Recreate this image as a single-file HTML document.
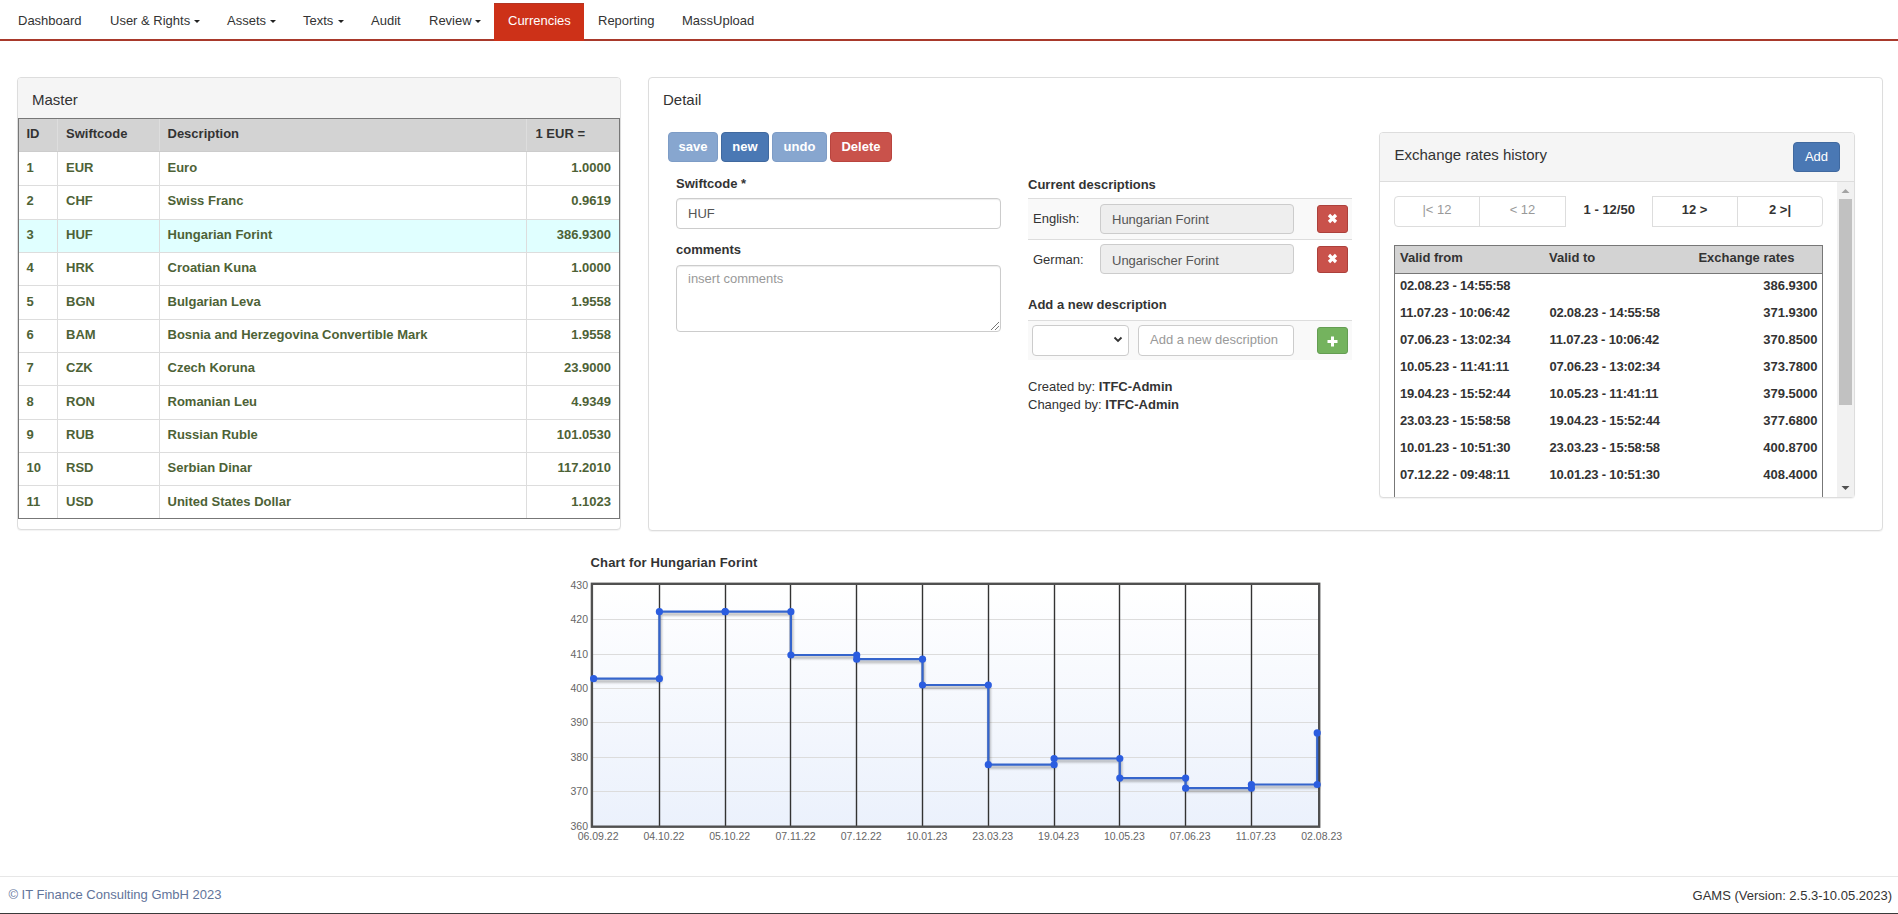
<!DOCTYPE html>
<html><head><meta charset="utf-8"><title>Currencies</title>
<style>
html,body{margin:0;padding:0;background:#fff;}
body{width:1898px;height:914px;position:relative;overflow:hidden;font-family:"Liberation Sans",sans-serif;font-size:13px;color:#333;}
.t{position:absolute;white-space:nowrap;}
.r{position:absolute;box-sizing:border-box;}
svg{position:absolute;}
</style></head><body>
<div class="r" style="left:0px;top:39px;width:1898px;height:2px;background:#a8392b;"></div>
<div class="r" style="left:494px;top:3px;width:90px;height:38px;background:#cd3118;border-top:1px solid #b23624;"></div>
<div class="t" style="left:18px;top:10.50px;font-size:13px;line-height:20px;font-weight:400;color:#333;">Dashboard</div>
<div class="t" style="left:110px;top:10.50px;font-size:13px;line-height:20px;font-weight:400;color:#333;">User &amp; Rights</div>
<div class="t" style="left:227px;top:10.50px;font-size:13px;line-height:20px;font-weight:400;color:#333;">Assets</div>
<div class="t" style="left:303px;top:10.50px;font-size:13px;line-height:20px;font-weight:400;color:#333;">Texts</div>
<div class="t" style="left:371px;top:10.50px;font-size:13px;line-height:20px;font-weight:400;color:#333;">Audit</div>
<div class="t" style="left:429px;top:10.50px;font-size:13px;line-height:20px;font-weight:400;color:#333;">Review</div>
<div class="t" style="left:598px;top:10.50px;font-size:13px;line-height:20px;font-weight:400;color:#333;">Reporting</div>
<div class="t" style="left:682px;top:10.50px;font-size:13px;line-height:20px;font-weight:400;color:#333;">MassUpload</div>
<div class="t" style="left:508px;top:10.50px;font-size:13px;line-height:20px;font-weight:400;color:#fff;">Currencies</div>
<div class="r" style="left:194px;top:20px;width:0;height:0;border-top:3px solid #222;border-left:3px solid transparent;border-right:3px solid transparent;"></div>
<div class="r" style="left:270px;top:20px;width:0;height:0;border-top:3px solid #222;border-left:3px solid transparent;border-right:3px solid transparent;"></div>
<div class="r" style="left:338px;top:20px;width:0;height:0;border-top:3px solid #222;border-left:3px solid transparent;border-right:3px solid transparent;"></div>
<div class="r" style="left:475px;top:20px;width:0;height:0;border-top:3px solid #222;border-left:3px solid transparent;border-right:3px solid transparent;"></div>
<div class="r" style="left:17px;top:77px;width:604px;height:453px;border:1px solid #ddd;border-radius:4px;box-shadow:0 1px 1px rgba(0,0,0,.05);background:#fff;"></div>
<div class="r" style="left:18px;top:78px;width:602px;height:40px;background:#f5f5f5;border-radius:3px 3px 0 0;"></div>
<div class="t" style="left:32px;top:88.80px;font-size:15px;line-height:22px;font-weight:400;color:#333;">Master</div>
<div class="r" style="left:18px;top:118px;width:602px;height:401px;border:1px solid #777;"></div>
<div class="r" style="left:19px;top:119px;width:600px;height:33px;background:#d3d3d3;"></div>
<div class="r" style="left:19px;top:219px;width:600px;height:33px;background:#e0ffff;"></div>
<div class="r" style="left:19px;top:185px;width:600px;height:1px;background:#ddd;"></div>
<div class="r" style="left:19px;top:219px;width:600px;height:1px;background:#ddd;"></div>
<div class="r" style="left:19px;top:252px;width:600px;height:1px;background:#ddd;"></div>
<div class="r" style="left:19px;top:285px;width:600px;height:1px;background:#ddd;"></div>
<div class="r" style="left:19px;top:319px;width:600px;height:1px;background:#ddd;"></div>
<div class="r" style="left:19px;top:352px;width:600px;height:1px;background:#ddd;"></div>
<div class="r" style="left:19px;top:385px;width:600px;height:1px;background:#ddd;"></div>
<div class="r" style="left:19px;top:419px;width:600px;height:1px;background:#ddd;"></div>
<div class="r" style="left:19px;top:452px;width:600px;height:1px;background:#ddd;"></div>
<div class="r" style="left:19px;top:485px;width:600px;height:1px;background:#ddd;"></div>
<div class="r" style="left:57px;top:119px;width:1px;height:399px;background:#ddd;"></div>
<div class="r" style="left:159px;top:119px;width:1px;height:399px;background:#ddd;"></div>
<div class="r" style="left:526px;top:119px;width:1px;height:399px;background:#ddd;"></div>
<div class="r" style="left:19px;top:151px;width:600px;height:1px;background:#ccc;"></div>
<div class="t" style="left:26.5px;top:124.10px;font-size:13px;line-height:20px;font-weight:700;color:#333;">ID</div>
<div class="t" style="left:66px;top:124.10px;font-size:13px;line-height:20px;font-weight:700;color:#333;">Swiftcode</div>
<div class="t" style="left:167.5px;top:124.10px;font-size:13px;line-height:20px;font-weight:700;color:#333;">Description</div>
<div class="t" style="left:535.5px;top:124.10px;font-size:13px;line-height:20px;font-weight:700;color:#333;">1 EUR =</div>
<div class="t" style="left:26.5px;top:158.10px;font-size:13px;line-height:20px;font-weight:700;color:#4d6236;">1</div>
<div class="t" style="left:66px;top:158.10px;font-size:13px;line-height:20px;font-weight:700;color:#4d6236;">EUR</div>
<div class="t" style="left:167.5px;top:158.10px;font-size:13px;line-height:20px;font-weight:700;color:#4d6236;">Euro</div>
<div class="t" style="right:1287px;top:158.10px;font-size:13px;line-height:20px;font-weight:700;color:#4d6236;text-align:right;">1.0000</div>
<div class="t" style="left:26.5px;top:191.47px;font-size:13px;line-height:20px;font-weight:700;color:#4d6236;">2</div>
<div class="t" style="left:66px;top:191.47px;font-size:13px;line-height:20px;font-weight:700;color:#4d6236;">CHF</div>
<div class="t" style="left:167.5px;top:191.47px;font-size:13px;line-height:20px;font-weight:700;color:#4d6236;">Swiss Franc</div>
<div class="t" style="right:1287px;top:191.47px;font-size:13px;line-height:20px;font-weight:700;color:#4d6236;text-align:right;">0.9619</div>
<div class="t" style="left:26.5px;top:224.84px;font-size:13px;line-height:20px;font-weight:700;color:#4d6236;">3</div>
<div class="t" style="left:66px;top:224.84px;font-size:13px;line-height:20px;font-weight:700;color:#4d6236;">HUF</div>
<div class="t" style="left:167.5px;top:224.84px;font-size:13px;line-height:20px;font-weight:700;color:#4d6236;">Hungarian Forint</div>
<div class="t" style="right:1287px;top:224.84px;font-size:13px;line-height:20px;font-weight:700;color:#4d6236;text-align:right;">386.9300</div>
<div class="t" style="left:26.5px;top:258.21px;font-size:13px;line-height:20px;font-weight:700;color:#4d6236;">4</div>
<div class="t" style="left:66px;top:258.21px;font-size:13px;line-height:20px;font-weight:700;color:#4d6236;">HRK</div>
<div class="t" style="left:167.5px;top:258.21px;font-size:13px;line-height:20px;font-weight:700;color:#4d6236;">Croatian Kuna</div>
<div class="t" style="right:1287px;top:258.21px;font-size:13px;line-height:20px;font-weight:700;color:#4d6236;text-align:right;">1.0000</div>
<div class="t" style="left:26.5px;top:291.58px;font-size:13px;line-height:20px;font-weight:700;color:#4d6236;">5</div>
<div class="t" style="left:66px;top:291.58px;font-size:13px;line-height:20px;font-weight:700;color:#4d6236;">BGN</div>
<div class="t" style="left:167.5px;top:291.58px;font-size:13px;line-height:20px;font-weight:700;color:#4d6236;">Bulgarian Leva</div>
<div class="t" style="right:1287px;top:291.58px;font-size:13px;line-height:20px;font-weight:700;color:#4d6236;text-align:right;">1.9558</div>
<div class="t" style="left:26.5px;top:324.95px;font-size:13px;line-height:20px;font-weight:700;color:#4d6236;">6</div>
<div class="t" style="left:66px;top:324.95px;font-size:13px;line-height:20px;font-weight:700;color:#4d6236;">BAM</div>
<div class="t" style="left:167.5px;top:324.95px;font-size:13px;line-height:20px;font-weight:700;color:#4d6236;">Bosnia and Herzegovina Convertible Mark</div>
<div class="t" style="right:1287px;top:324.95px;font-size:13px;line-height:20px;font-weight:700;color:#4d6236;text-align:right;">1.9558</div>
<div class="t" style="left:26.5px;top:358.32px;font-size:13px;line-height:20px;font-weight:700;color:#4d6236;">7</div>
<div class="t" style="left:66px;top:358.32px;font-size:13px;line-height:20px;font-weight:700;color:#4d6236;">CZK</div>
<div class="t" style="left:167.5px;top:358.32px;font-size:13px;line-height:20px;font-weight:700;color:#4d6236;">Czech Koruna</div>
<div class="t" style="right:1287px;top:358.32px;font-size:13px;line-height:20px;font-weight:700;color:#4d6236;text-align:right;">23.9000</div>
<div class="t" style="left:26.5px;top:391.69px;font-size:13px;line-height:20px;font-weight:700;color:#4d6236;">8</div>
<div class="t" style="left:66px;top:391.69px;font-size:13px;line-height:20px;font-weight:700;color:#4d6236;">RON</div>
<div class="t" style="left:167.5px;top:391.69px;font-size:13px;line-height:20px;font-weight:700;color:#4d6236;">Romanian Leu</div>
<div class="t" style="right:1287px;top:391.69px;font-size:13px;line-height:20px;font-weight:700;color:#4d6236;text-align:right;">4.9349</div>
<div class="t" style="left:26.5px;top:425.06px;font-size:13px;line-height:20px;font-weight:700;color:#4d6236;">9</div>
<div class="t" style="left:66px;top:425.06px;font-size:13px;line-height:20px;font-weight:700;color:#4d6236;">RUB</div>
<div class="t" style="left:167.5px;top:425.06px;font-size:13px;line-height:20px;font-weight:700;color:#4d6236;">Russian Ruble</div>
<div class="t" style="right:1287px;top:425.06px;font-size:13px;line-height:20px;font-weight:700;color:#4d6236;text-align:right;">101.0530</div>
<div class="t" style="left:26.5px;top:458.43px;font-size:13px;line-height:20px;font-weight:700;color:#4d6236;">10</div>
<div class="t" style="left:66px;top:458.43px;font-size:13px;line-height:20px;font-weight:700;color:#4d6236;">RSD</div>
<div class="t" style="left:167.5px;top:458.43px;font-size:13px;line-height:20px;font-weight:700;color:#4d6236;">Serbian Dinar</div>
<div class="t" style="right:1287px;top:458.43px;font-size:13px;line-height:20px;font-weight:700;color:#4d6236;text-align:right;">117.2010</div>
<div class="t" style="left:26.5px;top:491.80px;font-size:13px;line-height:20px;font-weight:700;color:#4d6236;">11</div>
<div class="t" style="left:66px;top:491.80px;font-size:13px;line-height:20px;font-weight:700;color:#4d6236;">USD</div>
<div class="t" style="left:167.5px;top:491.80px;font-size:13px;line-height:20px;font-weight:700;color:#4d6236;">United States Dollar</div>
<div class="t" style="right:1287px;top:491.80px;font-size:13px;line-height:20px;font-weight:700;color:#4d6236;text-align:right;">1.1023</div>
<div class="r" style="left:648px;top:77px;width:1235px;height:454px;border:1px solid #ddd;border-radius:4px;box-shadow:0 1px 1px rgba(0,0,0,.05);background:#fff;"></div>
<div class="t" style="left:663px;top:88.80px;font-size:15px;line-height:22px;font-weight:400;color:#333;">Detail</div>
<div class="r" style="left:668px;top:132px;width:50px;height:30px;background:#87a6cf;border:1px solid #7d9cc6;border-radius:4px;"></div>
<div class="t" style="left:668.0px;width:50px;top:136.50px;font-size:13px;line-height:20px;font-weight:700;color:#fff;text-align:center;">save</div>
<div class="r" style="left:721px;top:132px;width:48px;height:30px;background:#4a78b4;border:1px solid #40699f;border-radius:4px;"></div>
<div class="t" style="left:721.0px;width:48px;top:136.50px;font-size:13px;line-height:20px;font-weight:700;color:#fff;text-align:center;">new</div>
<div class="r" style="left:772px;top:132px;width:55px;height:30px;background:#87a6cf;border:1px solid #7d9cc6;border-radius:4px;"></div>
<div class="t" style="left:772.0px;width:55px;top:136.50px;font-size:13px;line-height:20px;font-weight:700;color:#fff;text-align:center;">undo</div>
<div class="r" style="left:830px;top:132px;width:62px;height:30px;background:#c9524b;border:1px solid #b9443e;border-radius:4px;"></div>
<div class="t" style="left:830.0px;width:62px;top:136.50px;font-size:13px;line-height:20px;font-weight:700;color:#fff;text-align:center;">Delete</div>
<div class="t" style="left:676px;top:174.10px;font-size:13px;line-height:20px;font-weight:700;color:#333;">Swiftcode *</div>
<div class="r" style="left:676px;top:198px;width:325px;height:31px;border:1px solid #ccc;border-radius:4px;box-shadow:inset 0 1px 1px rgba(0,0,0,.075);"></div>
<div class="t" style="left:688px;top:203.70px;font-size:13px;line-height:20px;font-weight:400;color:#555;">HUF</div>
<div class="t" style="left:676px;top:240.10px;font-size:13px;line-height:20px;font-weight:700;color:#333;">comments</div>
<div class="r" style="left:676px;top:265px;width:325px;height:67px;border:1px solid #ccc;border-radius:4px;box-shadow:inset 0 1px 1px rgba(0,0,0,.075);"></div>
<div class="t" style="left:688px;top:269.10px;font-size:13px;line-height:20px;font-weight:400;color:#999;">insert comments</div>
<svg style="left:990px;top:321px" width="10" height="10"><path d="M9 1 L1 9 M9 5 L5 9" stroke="#777" stroke-width="1"/></svg>
<div class="t" style="left:1028px;top:174.50px;font-size:13px;line-height:20px;font-weight:700;color:#333;">Current descriptions</div>
<div class="r" style="left:1028px;top:198px;width:324px;height:1px;background:#ddd;"></div>
<div class="r" style="left:1028px;top:199px;width:324px;height:40px;background:#f9f9f9;"></div>
<div class="r" style="left:1028px;top:239px;width:324px;height:1px;background:#ddd;"></div>
<div class="t" style="left:1033px;top:208.50px;font-size:13px;line-height:20px;font-weight:400;color:#333;">English:</div>
<div class="r" style="left:1100px;top:204px;width:194px;height:30px;background:#eee;border:1px solid #ccc;border-radius:4px;"></div>
<div class="t" style="left:1112px;top:209.50px;font-size:13px;line-height:20px;font-weight:400;color:#555;">Hungarian Forint</div>
<div class="r" style="left:1317px;top:205px;width:31px;height:28px;background:#c9524b;border:1px solid #ac403b;border-radius:3px;"></div>
<svg style="left:1326px;top:211.9px" width="13" height="13"><path d="M3 3 L10 10 M10 3 L3 10" stroke="#fff" stroke-width="3.2" stroke-linecap="butt"/></svg>
<div class="t" style="left:1033px;top:249.50px;font-size:13px;line-height:20px;font-weight:400;color:#333;">German:</div>
<div class="r" style="left:1100px;top:244px;width:194px;height:30px;background:#eee;border:1px solid #ccc;border-radius:4px;"></div>
<div class="t" style="left:1112px;top:250.50px;font-size:13px;line-height:20px;font-weight:400;color:#555;">Ungarischer Forint</div>
<div class="r" style="left:1317px;top:246px;width:31px;height:27px;background:#c9524b;border:1px solid #ac403b;border-radius:3px;"></div>
<svg style="left:1326px;top:252.39999999999998px" width="13" height="13"><path d="M3 3 L10 10 M10 3 L3 10" stroke="#fff" stroke-width="3.2" stroke-linecap="butt"/></svg>
<div class="t" style="left:1028px;top:295.10px;font-size:13px;line-height:20px;font-weight:700;color:#333;">Add a new description</div>
<div class="r" style="left:1028px;top:320px;width:324px;height:1px;background:#ddd;"></div>
<div class="r" style="left:1028px;top:321px;width:324px;height:39px;background:#f9f9f9;"></div>
<div class="r" style="left:1032px;top:325px;width:97px;height:31px;background:#fff;border:1px solid #ccc;border-radius:4px;"></div>
<svg style="left:1113px;top:336px" width="10" height="8"><path d="M1.5 1.5 L5 5 L8.5 1.5" stroke="#333" stroke-width="1.8" fill="none"/></svg>
<div class="r" style="left:1138px;top:325px;width:156px;height:31px;background:#fff;border:1px solid #ccc;border-radius:4px;"></div>
<div class="t" style="left:1150px;top:329.90px;font-size:13px;line-height:20px;font-weight:400;color:#999;">Add a new description</div>
<div class="r" style="left:1317px;top:327px;width:31px;height:27px;background:#74b35e;border:1px solid #649d52;border-radius:3px;"></div>
<svg style="left:1326px;top:334.5px" width="13" height="13"><path d="M6.5 1.5 L6.5 11.5 M1.5 6.5 L11.5 6.5" stroke="#fff" stroke-width="3"/></svg>
<div class="t" style="left:1028px;top:377.10px;font-size:13px;line-height:20px;font-weight:400;color:#333;">Created by: <b>ITFC-Admin</b></div>
<div class="t" style="left:1028px;top:395.10px;font-size:13px;line-height:20px;font-weight:400;color:#333;">Changed by: <b>ITFC-Admin</b></div>
<div class="r" style="left:1379px;top:132px;width:476px;height:366px;border:1px solid #ddd;border-radius:4px;box-shadow:0 1px 1px rgba(0,0,0,.05);background:#fff;overflow:hidden;"></div>
<div class="r" style="left:1380px;top:133px;width:474px;height:49px;background:#f5f5f5;border-bottom:1px solid #ddd;border-radius:3px 3px 0 0;"></div>
<div class="t" style="left:1394.5px;top:143.80px;font-size:15px;line-height:22px;font-weight:400;color:#333;">Exchange rates history</div>
<div class="r" style="left:1793px;top:142px;width:47px;height:30px;background:#4a78b4;border:1px solid #40699f;border-radius:4px;"></div>
<div class="t" style="left:1793.0px;width:47px;top:146.50px;font-size:13px;line-height:20px;font-weight:400;color:#fff;text-align:center;">Add</div>
<div class="r" style="left:1837px;top:182px;width:17px;height:315px;background:#f1f1f1;"></div>
<div class="r" style="left:1839px;top:199px;width:13px;height:206px;background:#c1c1c1;"></div>
<svg style="left:1841px;top:188px" width="9" height="6"><path d="M0.5 5 L4.5 1 L8.5 5 Z" fill="#a3a3a3"/></svg>
<svg style="left:1841px;top:485px" width="9" height="6"><path d="M0.5 1 L4.5 5 L8.5 1 Z" fill="#505050"/></svg>
<div class="r" style="left:1394px;top:196px;width:86px;height:31px;border:1px solid #ddd;border-radius:4px 0 0 4px;"></div>
<div class="r" style="left:1479px;top:196px;width:87px;height:31px;border:1px solid #ddd;border-radius:0;"></div>
<div class="t" style="left:1394.0px;width:86px;top:200.10px;font-size:13px;line-height:20px;font-weight:400;color:#999;text-align:center;">|&lt; 12</div>
<div class="t" style="left:1479.5px;width:86px;top:200.10px;font-size:13px;line-height:20px;font-weight:400;color:#999;text-align:center;">&lt; 12</div>
<div class="t" style="left:1583.6px;top:200.10px;font-size:13px;line-height:20px;font-weight:700;color:#333;">1 - 12/50</div>
<div class="r" style="left:1652px;top:196px;width:86px;height:31px;border:1px solid #ddd;border-radius:0;"></div>
<div class="r" style="left:1737px;top:196px;width:86px;height:31px;border:1px solid #ddd;border-radius:0 4px 4px 0;"></div>
<div class="t" style="left:1651.5px;width:86px;top:200.10px;font-size:13px;line-height:20px;font-weight:700;color:#333;text-align:center;">12 &gt;</div>
<div class="t" style="left:1737.0px;width:86px;top:200.10px;font-size:13px;line-height:20px;font-weight:700;color:#333;text-align:center;">2 &gt;|</div>
<div class="r" style="left:1394px;top:245px;width:429px;height:252px;border:1px solid #777;border-bottom:none;"></div>
<div class="r" style="left:1395px;top:246px;width:427px;height:28px;background:#d3d3d3;border-bottom:1px solid #777;"></div>
<div class="t" style="left:1400px;top:248.30px;font-size:13px;line-height:20px;font-weight:700;color:#333;">Valid from</div>
<div class="t" style="left:1549px;top:248.30px;font-size:13px;line-height:20px;font-weight:700;color:#333;">Valid to</div>
<div class="t" style="left:1698.4px;top:248.30px;font-size:13px;line-height:20px;font-weight:700;color:#333;">Exchange rates</div>
<div class="t" style="left:1400px;top:276.00px;font-size:13px;line-height:20px;font-weight:700;color:#333;letter-spacing:-0.2px;">02.08.23 - 14:55:58</div>
<div class="t" style="right:80.5px;top:276.00px;font-size:13px;line-height:20px;font-weight:700;color:#333;text-align:right;">386.9300</div>
<div class="t" style="left:1400px;top:303.00px;font-size:13px;line-height:20px;font-weight:700;color:#333;letter-spacing:-0.2px;">11.07.23 - 10:06:42</div>
<div class="t" style="left:1549.4px;top:303.00px;font-size:13px;line-height:20px;font-weight:700;color:#333;letter-spacing:-0.2px;">02.08.23 - 14:55:58</div>
<div class="t" style="right:80.5px;top:303.00px;font-size:13px;line-height:20px;font-weight:700;color:#333;text-align:right;">371.9300</div>
<div class="t" style="left:1400px;top:330.00px;font-size:13px;line-height:20px;font-weight:700;color:#333;letter-spacing:-0.2px;">07.06.23 - 13:02:34</div>
<div class="t" style="left:1549.4px;top:330.00px;font-size:13px;line-height:20px;font-weight:700;color:#333;letter-spacing:-0.2px;">11.07.23 - 10:06:42</div>
<div class="t" style="right:80.5px;top:330.00px;font-size:13px;line-height:20px;font-weight:700;color:#333;text-align:right;">370.8500</div>
<div class="t" style="left:1400px;top:357.00px;font-size:13px;line-height:20px;font-weight:700;color:#333;letter-spacing:-0.2px;">10.05.23 - 11:41:11</div>
<div class="t" style="left:1549.4px;top:357.00px;font-size:13px;line-height:20px;font-weight:700;color:#333;letter-spacing:-0.2px;">07.06.23 - 13:02:34</div>
<div class="t" style="right:80.5px;top:357.00px;font-size:13px;line-height:20px;font-weight:700;color:#333;text-align:right;">373.7800</div>
<div class="t" style="left:1400px;top:384.00px;font-size:13px;line-height:20px;font-weight:700;color:#333;letter-spacing:-0.2px;">19.04.23 - 15:52:44</div>
<div class="t" style="left:1549.4px;top:384.00px;font-size:13px;line-height:20px;font-weight:700;color:#333;letter-spacing:-0.2px;">10.05.23 - 11:41:11</div>
<div class="t" style="right:80.5px;top:384.00px;font-size:13px;line-height:20px;font-weight:700;color:#333;text-align:right;">379.5000</div>
<div class="t" style="left:1400px;top:411.00px;font-size:13px;line-height:20px;font-weight:700;color:#333;letter-spacing:-0.2px;">23.03.23 - 15:58:58</div>
<div class="t" style="left:1549.4px;top:411.00px;font-size:13px;line-height:20px;font-weight:700;color:#333;letter-spacing:-0.2px;">19.04.23 - 15:52:44</div>
<div class="t" style="right:80.5px;top:411.00px;font-size:13px;line-height:20px;font-weight:700;color:#333;text-align:right;">377.6800</div>
<div class="t" style="left:1400px;top:438.00px;font-size:13px;line-height:20px;font-weight:700;color:#333;letter-spacing:-0.2px;">10.01.23 - 10:51:30</div>
<div class="t" style="left:1549.4px;top:438.00px;font-size:13px;line-height:20px;font-weight:700;color:#333;letter-spacing:-0.2px;">23.03.23 - 15:58:58</div>
<div class="t" style="right:80.5px;top:438.00px;font-size:13px;line-height:20px;font-weight:700;color:#333;text-align:right;">400.8700</div>
<div class="t" style="left:1400px;top:465.00px;font-size:13px;line-height:20px;font-weight:700;color:#333;letter-spacing:-0.2px;">07.12.22 - 09:48:11</div>
<div class="t" style="left:1549.4px;top:465.00px;font-size:13px;line-height:20px;font-weight:700;color:#333;letter-spacing:-0.2px;">10.01.23 - 10:51:30</div>
<div class="t" style="right:80.5px;top:465.00px;font-size:13px;line-height:20px;font-weight:700;color:#333;text-align:right;">408.4000</div>
<div class="t" style="left:590.6px;top:552.50px;font-size:13px;line-height:20px;font-weight:700;color:#333;letter-spacing:0.14px;">Chart for Hungarian Forint</div>
<svg style="left:0;top:0" width="1898" height="914"><defs><linearGradient id="bg" x1="0" y1="0" x2="0" y2="1"><stop offset="0" stop-color="#ffffff"/><stop offset="1" stop-color="#ebf1fc"/></linearGradient><filter id="sh" x="-5%" y="-20%" width="110%" height="140%"><feGaussianBlur stdDeviation="1.2"/></filter></defs><rect x="592" y="584" width="727" height="242" fill="url(#bg)"/><line x1="593" y1="619.5" x2="1318" y2="619.5" stroke="#dcdcdc" stroke-width="1"/><line x1="593" y1="654.5" x2="1318" y2="654.5" stroke="#dcdcdc" stroke-width="1"/><line x1="593" y1="688.5" x2="1318" y2="688.5" stroke="#dcdcdc" stroke-width="1"/><line x1="593" y1="722.5" x2="1318" y2="722.5" stroke="#dcdcdc" stroke-width="1"/><line x1="593" y1="757.5" x2="1318" y2="757.5" stroke="#dcdcdc" stroke-width="1"/><line x1="593" y1="791.5" x2="1318" y2="791.5" stroke="#dcdcdc" stroke-width="1"/><line x1="659.5" y1="584" x2="659.5" y2="826" stroke="#333" stroke-width="1.4"/><line x1="725.5" y1="584" x2="725.5" y2="826" stroke="#333" stroke-width="1.4"/><line x1="790.5" y1="584" x2="790.5" y2="826" stroke="#333" stroke-width="1.4"/><line x1="856.5" y1="584" x2="856.5" y2="826" stroke="#333" stroke-width="1.4"/><line x1="922.5" y1="584" x2="922.5" y2="826" stroke="#333" stroke-width="1.4"/><line x1="988.5" y1="584" x2="988.5" y2="826" stroke="#333" stroke-width="1.4"/><line x1="1054.5" y1="584" x2="1054.5" y2="826" stroke="#333" stroke-width="1.4"/><line x1="1119.5" y1="584" x2="1119.5" y2="826" stroke="#333" stroke-width="1.4"/><line x1="1185.5" y1="584" x2="1185.5" y2="826" stroke="#333" stroke-width="1.4"/><line x1="1251.5" y1="584" x2="1251.5" y2="826" stroke="#333" stroke-width="1.4"/><rect x="591.9" y="583.8" width="727.3" height="242.9" fill="none" stroke="#505050" stroke-width="2.4"/><path d="M593.6 678.7 L659.4 678.7 L659.4 611.7 L725.2 611.7 L725.2 611.7 L790.9 611.7 L790.9 655.0 L856.7 655.0 L856.7 659.2 L922.5 659.2 L922.5 685.0 L988.3 685.0 L988.3 764.7 L1054.1 764.7 L1054.1 758.5 L1119.8 758.5 L1119.8 778.1 L1185.6 778.1 L1185.6 788.2 L1251.4 788.2 L1251.4 784.5 L1317.2 784.5 L1317.2 732.9" transform="translate(1,2.5)" stroke="rgba(0,0,0,0.25)" stroke-width="3" fill="none" filter="url(#sh)"/><path d="M593.6 678.7 L659.4 678.7 L659.4 611.7 L725.2 611.7 L725.2 611.7 L790.9 611.7 L790.9 655.0 L856.7 655.0 L856.7 659.2 L922.5 659.2 L922.5 685.0 L988.3 685.0 L988.3 764.7 L1054.1 764.7 L1054.1 758.5 L1119.8 758.5 L1119.8 778.1 L1185.6 778.1 L1185.6 788.2 L1251.4 788.2 L1251.4 784.5 L1317.2 784.5 L1317.2 732.9" stroke="#3565cc" stroke-width="2.2" fill="none" stroke-linejoin="round"/><circle cx="593.6" cy="678.7" r="3.6" fill="#2b5de0"/><circle cx="659.4" cy="678.7" r="3.6" fill="#2b5de0"/><circle cx="659.4" cy="611.7" r="3.6" fill="#2b5de0"/><circle cx="725.2" cy="611.7" r="3.6" fill="#2b5de0"/><circle cx="725.2" cy="611.7" r="3.6" fill="#2b5de0"/><circle cx="790.9" cy="611.7" r="3.6" fill="#2b5de0"/><circle cx="790.9" cy="655.0" r="3.6" fill="#2b5de0"/><circle cx="856.7" cy="655.0" r="3.6" fill="#2b5de0"/><circle cx="856.7" cy="659.2" r="3.6" fill="#2b5de0"/><circle cx="922.5" cy="659.2" r="3.6" fill="#2b5de0"/><circle cx="922.5" cy="685.0" r="3.6" fill="#2b5de0"/><circle cx="988.3" cy="685.0" r="3.6" fill="#2b5de0"/><circle cx="988.3" cy="764.7" r="3.6" fill="#2b5de0"/><circle cx="1054.1" cy="764.7" r="3.6" fill="#2b5de0"/><circle cx="1054.1" cy="758.5" r="3.6" fill="#2b5de0"/><circle cx="1119.8" cy="758.5" r="3.6" fill="#2b5de0"/><circle cx="1119.8" cy="778.1" r="3.6" fill="#2b5de0"/><circle cx="1185.6" cy="778.1" r="3.6" fill="#2b5de0"/><circle cx="1185.6" cy="788.2" r="3.6" fill="#2b5de0"/><circle cx="1251.4" cy="788.2" r="3.6" fill="#2b5de0"/><circle cx="1251.4" cy="784.5" r="3.6" fill="#2b5de0"/><circle cx="1317.2" cy="784.5" r="3.6" fill="#2b5de0"/><circle cx="1317.2" cy="732.9" r="3.6" fill="#2b5de0"/></svg>
<div class="t" style="right:1310px;top:577.00px;font-size:10.5px;line-height:16px;font-weight:400;color:#666;text-align:right;">430</div>
<div class="t" style="right:1310px;top:611.36px;font-size:10.5px;line-height:16px;font-weight:400;color:#666;text-align:right;">420</div>
<div class="t" style="right:1310px;top:645.72px;font-size:10.5px;line-height:16px;font-weight:400;color:#666;text-align:right;">410</div>
<div class="t" style="right:1310px;top:680.08px;font-size:10.5px;line-height:16px;font-weight:400;color:#666;text-align:right;">400</div>
<div class="t" style="right:1310px;top:714.44px;font-size:10.5px;line-height:16px;font-weight:400;color:#666;text-align:right;">390</div>
<div class="t" style="right:1310px;top:748.80px;font-size:10.5px;line-height:16px;font-weight:400;color:#666;text-align:right;">380</div>
<div class="t" style="right:1310px;top:783.16px;font-size:10.5px;line-height:16px;font-weight:400;color:#666;text-align:right;">370</div>
<div class="t" style="right:1310px;top:817.52px;font-size:10.5px;line-height:16px;font-weight:400;color:#666;text-align:right;">360</div>
<div class="t" style="left:568.1px;width:60px;top:827.86px;font-size:10.5px;line-height:16px;font-weight:400;color:#666;text-align:center;">06.09.22</div>
<div class="t" style="left:633.88px;width:60px;top:827.86px;font-size:10.5px;line-height:16px;font-weight:400;color:#666;text-align:center;">04.10.22</div>
<div class="t" style="left:699.6600000000001px;width:60px;top:827.86px;font-size:10.5px;line-height:16px;font-weight:400;color:#666;text-align:center;">05.10.22</div>
<div class="t" style="left:765.44px;width:60px;top:827.86px;font-size:10.5px;line-height:16px;font-weight:400;color:#666;text-align:center;">07.11.22</div>
<div class="t" style="left:831.22px;width:60px;top:827.86px;font-size:10.5px;line-height:16px;font-weight:400;color:#666;text-align:center;">07.12.22</div>
<div class="t" style="left:897.0px;width:60px;top:827.86px;font-size:10.5px;line-height:16px;font-weight:400;color:#666;text-align:center;">10.01.23</div>
<div class="t" style="left:962.78px;width:60px;top:827.86px;font-size:10.5px;line-height:16px;font-weight:400;color:#666;text-align:center;">23.03.23</div>
<div class="t" style="left:1028.56px;width:60px;top:827.86px;font-size:10.5px;line-height:16px;font-weight:400;color:#666;text-align:center;">19.04.23</div>
<div class="t" style="left:1094.3400000000001px;width:60px;top:827.86px;font-size:10.5px;line-height:16px;font-weight:400;color:#666;text-align:center;">10.05.23</div>
<div class="t" style="left:1160.12px;width:60px;top:827.86px;font-size:10.5px;line-height:16px;font-weight:400;color:#666;text-align:center;">07.06.23</div>
<div class="t" style="left:1225.9px;width:60px;top:827.86px;font-size:10.5px;line-height:16px;font-weight:400;color:#666;text-align:center;">11.07.23</div>
<div class="t" style="left:1291.68px;width:60px;top:827.86px;font-size:10.5px;line-height:16px;font-weight:400;color:#666;text-align:center;">02.08.23</div>
<div class="r" style="left:0px;top:876px;width:1898px;height:1px;background:#e7e7e7;"></div>
<div class="t" style="left:8.4px;top:884.50px;font-size:13px;line-height:20px;font-weight:400;color:#62749a;">© IT Finance Consulting GmbH 2023</div>
<div class="t" style="right:6px;top:885.50px;font-size:13px;line-height:20px;font-weight:400;color:#333;text-align:right;">GAMS (Version: 2.5.3-10.05.2023)</div>
<div class="r" style="left:0px;top:913px;width:1898px;height:1px;background:#3a3a3a;"></div>
</body></html>
